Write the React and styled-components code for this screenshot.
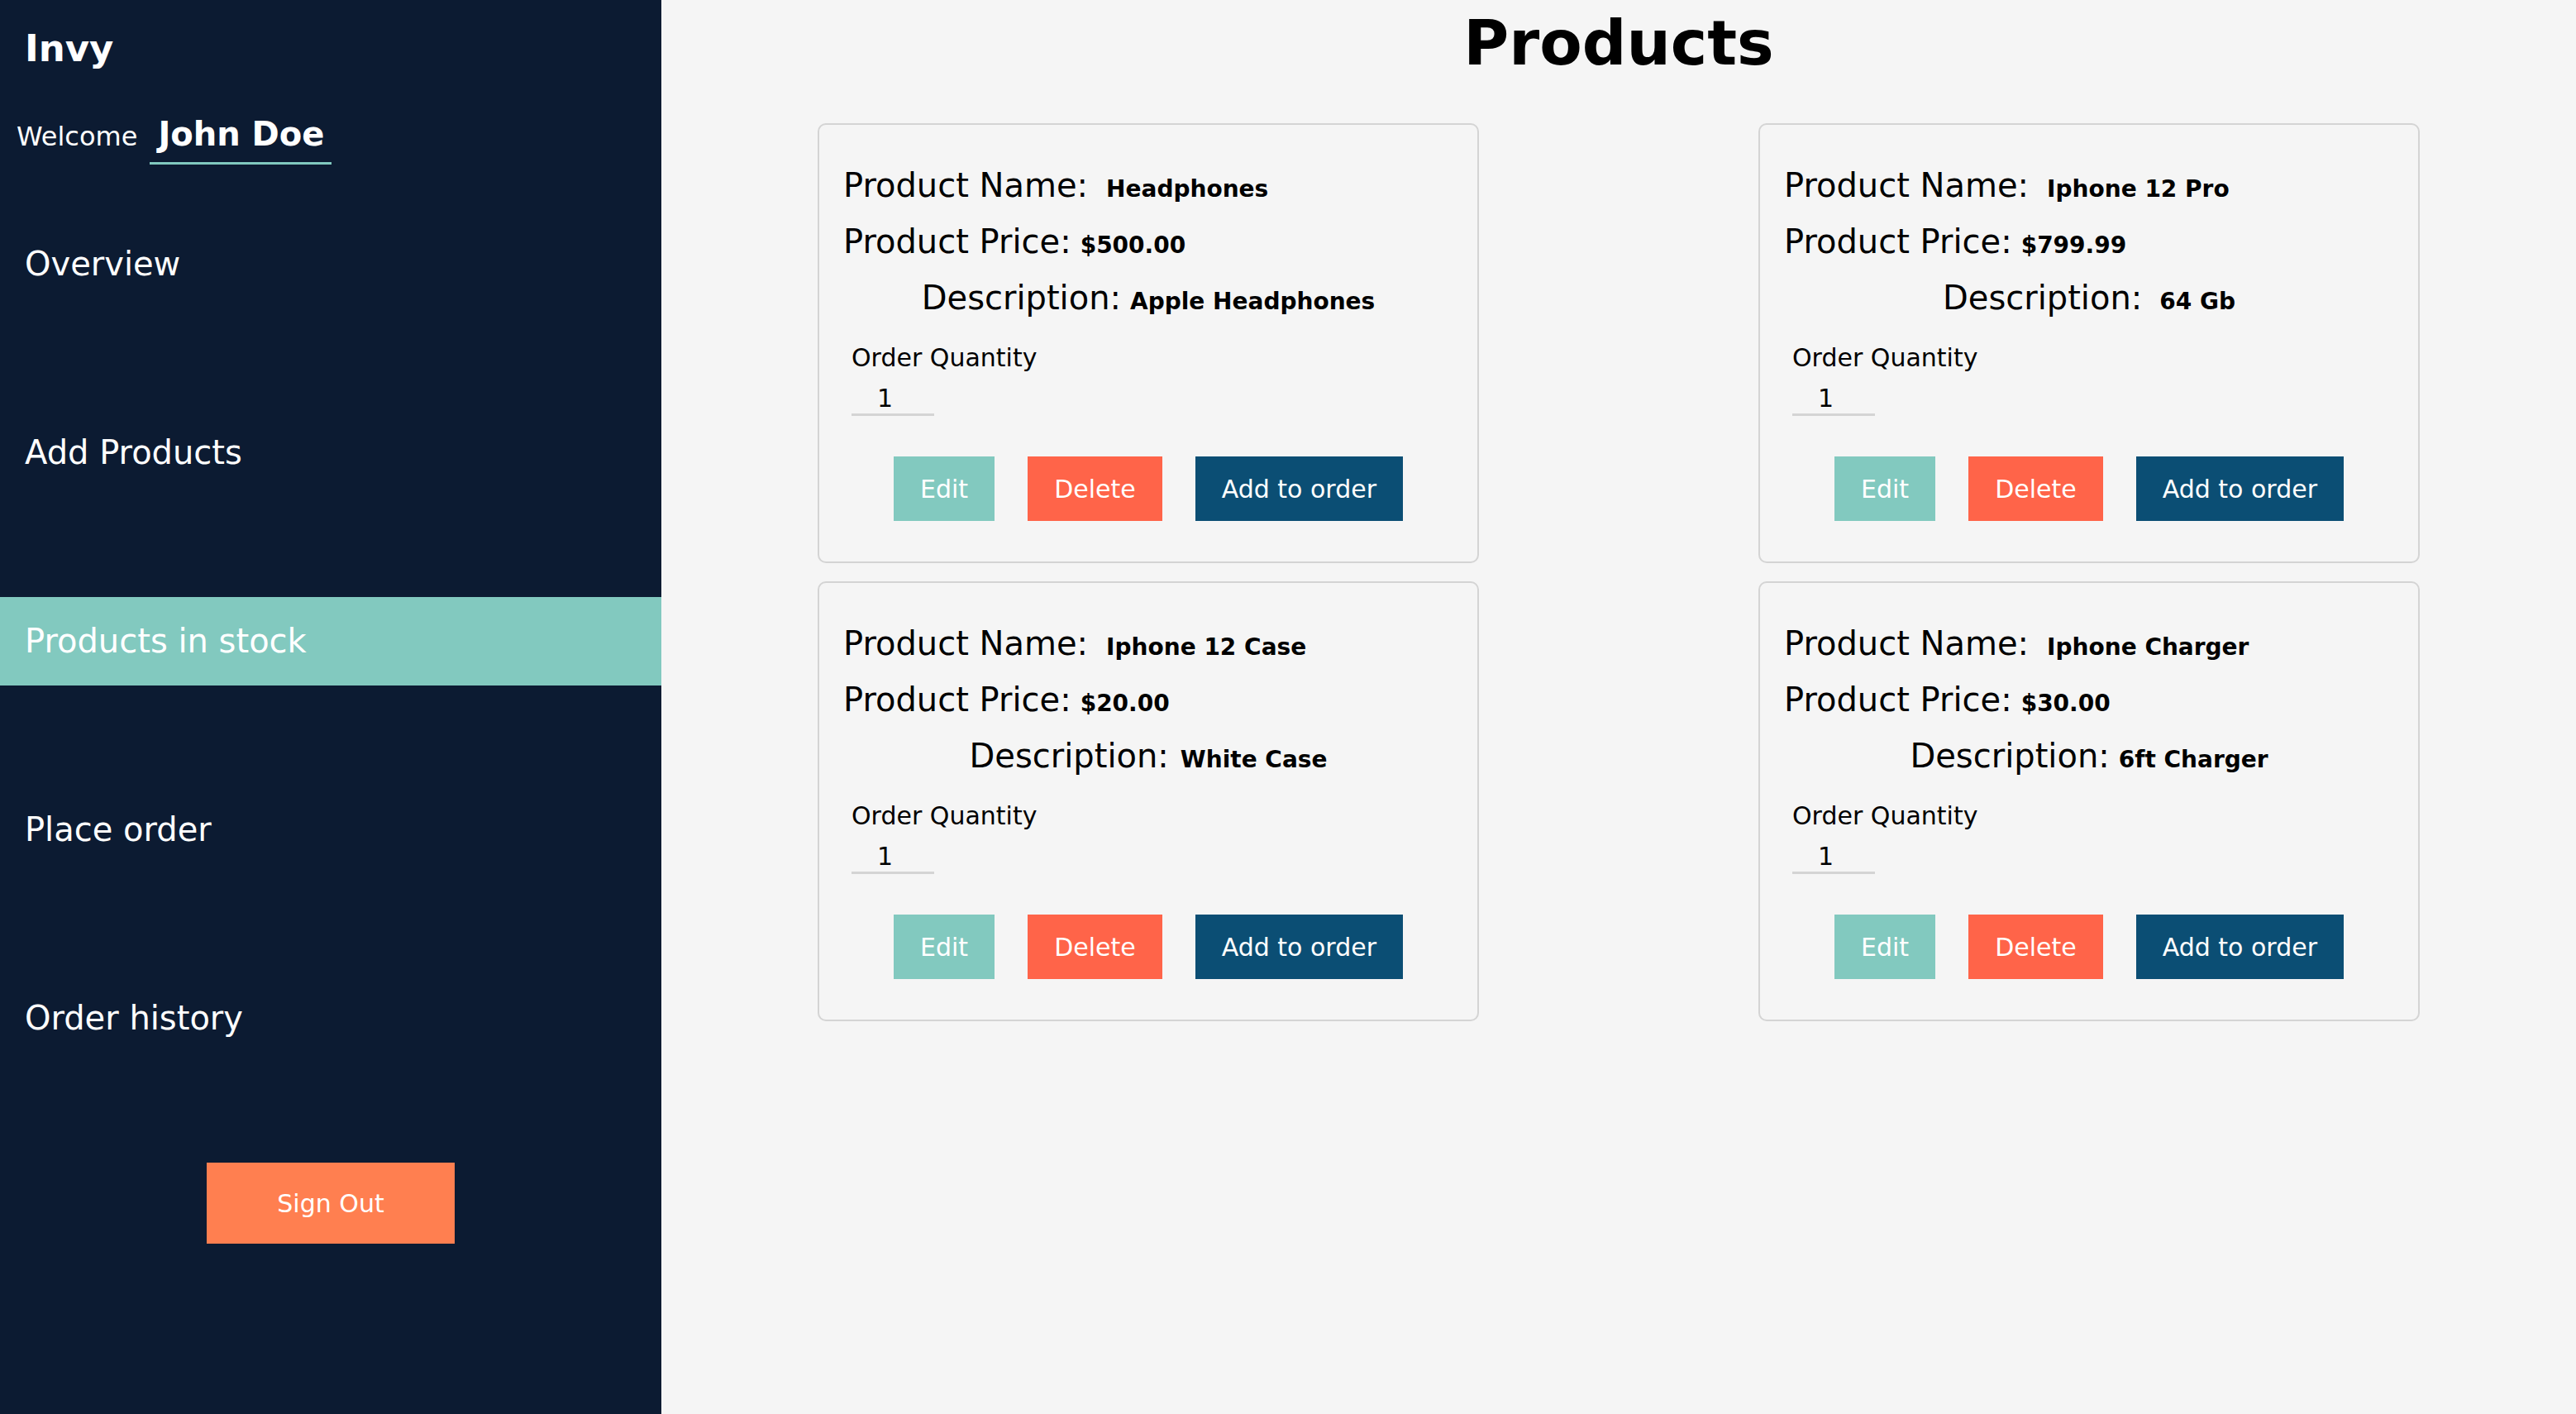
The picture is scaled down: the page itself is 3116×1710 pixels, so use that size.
import React from 'react'
import styled, { createGlobalStyle } from 'styled-components';

const GlobalStyle = createGlobalStyle`
    * {
        box-sizing: border-box;
    }
    body {
        margin: 0;
        font-family: "DejaVu Sans", "Liberation Sans", sans-serif;
        background: #f5f5f5;
    }
`;

const Layout = styled.div`
    display: flex;
    min-height: 100vh;
`;

const Sidebar = styled.aside`
    width: 800px;
    flex-shrink: 0;
    background: #0c1b32;
    color: #fff;
    display: flex;
    flex-direction: column;
    padding-top: 30px;
`;

const Brand = styled.div`
    font-size: 45px;
    font-weight: 700;
    line-height: 58px;
    padding-left: 30px;
`;

const WelcomeRow = styled.div`
    display: flex;
    align-items: baseline;
    margin-top: 50px;
    padding-left: 20px;
`;

const WelcomeText = styled.span`
    font-size: 32px;
    line-height: 40px;
    margin-right: 15px;
`;

const UserName = styled.span`
    display: inline-block;
    width: 220px;
    font-size: 40px;
    font-weight: 700;
    line-height: 48px;
    padding: 0 0 10px 10px;
    border-bottom: 3px solid #81c9bf;
    white-space: nowrap;
`;

const NavList = styled.nav`
    display: flex;
    flex-direction: column;
    gap: 121px;
    margin-top: 67px;
`;

const NavItem = styled.div`
    height: 107px;
    line-height: 107px;
    padding-left: 30px;
    font-size: 40px;
    background: ${props => props.$active ? '#82c9bf' : 'transparent'};
    cursor: pointer;
`;

const SignOutWrap = styled.div`
    display: flex;
    justify-content: center;
    margin-top: 121px;
`;

const SignOutButton = styled.button`
    width: 300px;
    height: 98px;
    border: none;
    background: #ff7f50;
    color: #fff;
    font-family: inherit;
    font-size: 30px;
    cursor: pointer;
`;

const Main = styled.main`
    flex: 1;
    background: #f5f5f5;
`;

const Title = styled.h1`
    margin: 0;
    text-align: center;
    font-size: 75px;
    font-weight: 700;
    line-height: 104px;
    color: #000;
`;

const Grid = styled.div`
    display: grid;
    grid-template-columns: 800px 800px;
    justify-content: center;
    column-gap: 338px;
    row-gap: 22px;
    margin-top: 45px;
`;

const Card = styled.div`
    border: 2px solid #d4d4d4;
    border-radius: 10px;
    padding: 39px 29px 49px;
    color: #000;
`;

const Line = styled.div`
    font-size: 40px;
    line-height: 68px;
    text-align: ${props => props.$center ? 'center' : 'left'};
    white-space: nowrap;
`;

const Value = styled.span`
    font-size: 28px;
    font-weight: 700;
    line-height: 1;
    margin-left: ${props => props.$gap}px;
`;

const QuantityBlock = styled.div`
    margin: 21px 0 0 10px;
    display: flex;
    flex-direction: column;
    align-items: flex-start;
`;

const QuantityLabel = styled.label`
    font-size: 30px;
    line-height: 36px;
`;

const QuantityInput = styled.input`
    margin-top: 12px;
    width: 100px;
    height: 40px;
    padding: 0 0 0 31px;
    border: none;
    border-bottom: 3px solid #d4d4d4;
    background: transparent;
    font-family: inherit;
    font-size: 30px;
    line-height: 37px;
    color: #000;
    outline: none;
`;

const Actions = styled.div`
    display: flex;
    justify-content: center;
    gap: 40px;
    margin-top: 49px;
`;

const ActionButton = styled.button`
    height: 78px;
    padding: 0 32px;
    border: none;
    background: ${props => props.$bg};
    color: #fff;
    font-family: inherit;
    font-size: 30px;
    cursor: pointer;
`;

const products = [
    { name: 'Headphones', price: '$500.00', description: 'Apple Headphones', descGap: 11 },
    { name: 'Iphone 12 Pro', price: '$799.99', description: '64 Gb', descGap: 21 },
    { name: 'Iphone 12 Case', price: '$20.00', description: 'White Case', descGap: 14 },
    { name: 'Iphone Charger', price: '$30.00', description: '6ft Charger', descGap: 11 },
];

const navLinks = ['Overview', 'Add Products', 'Products in stock', 'Place order', 'Order history'];

const ProductCard = ({ product }) => (
    <Card>
        <Line>Product Name:<Value $gap={22}>{product.name}</Value></Line>
        <Line>Product Price:<Value $gap={11}>{product.price}</Value></Line>
        <Line $center>Description:<Value $gap={product.descGap}>{product.description}</Value></Line>
        <QuantityBlock>
            <QuantityLabel>Order Quantity</QuantityLabel>
            <QuantityInput type='text' defaultValue='1' />
        </QuantityBlock>
        <Actions>
            <ActionButton $bg='#82c9bf'>Edit</ActionButton>
            <ActionButton $bg='#ff6449'>Delete</ActionButton>
            <ActionButton $bg='#0b4e74'>Add to order</ActionButton>
        </Actions>
    </Card>
);

const App = () => {
    return (
        <>
            <GlobalStyle />
            <Layout>
                <Sidebar>
                    <Brand>Invy</Brand>
                    <WelcomeRow>
                        <WelcomeText>Welcome</WelcomeText>
                        <UserName>John Doe</UserName>
                    </WelcomeRow>
                    <NavList>
                        {navLinks.map(link => (
                            <NavItem key={link} $active={link === 'Products in stock'}>{link}</NavItem>
                        ))}
                    </NavList>
                    <SignOutWrap>
                        <SignOutButton>Sign Out</SignOutButton>
                    </SignOutWrap>
                </Sidebar>
                <Main>
                    <Title>Products</Title>
                    <Grid>
                        {products.map(p => <ProductCard key={p.name} product={p} />)}
                    </Grid>
                </Main>
            </Layout>
        </>
    )
};

export default App
